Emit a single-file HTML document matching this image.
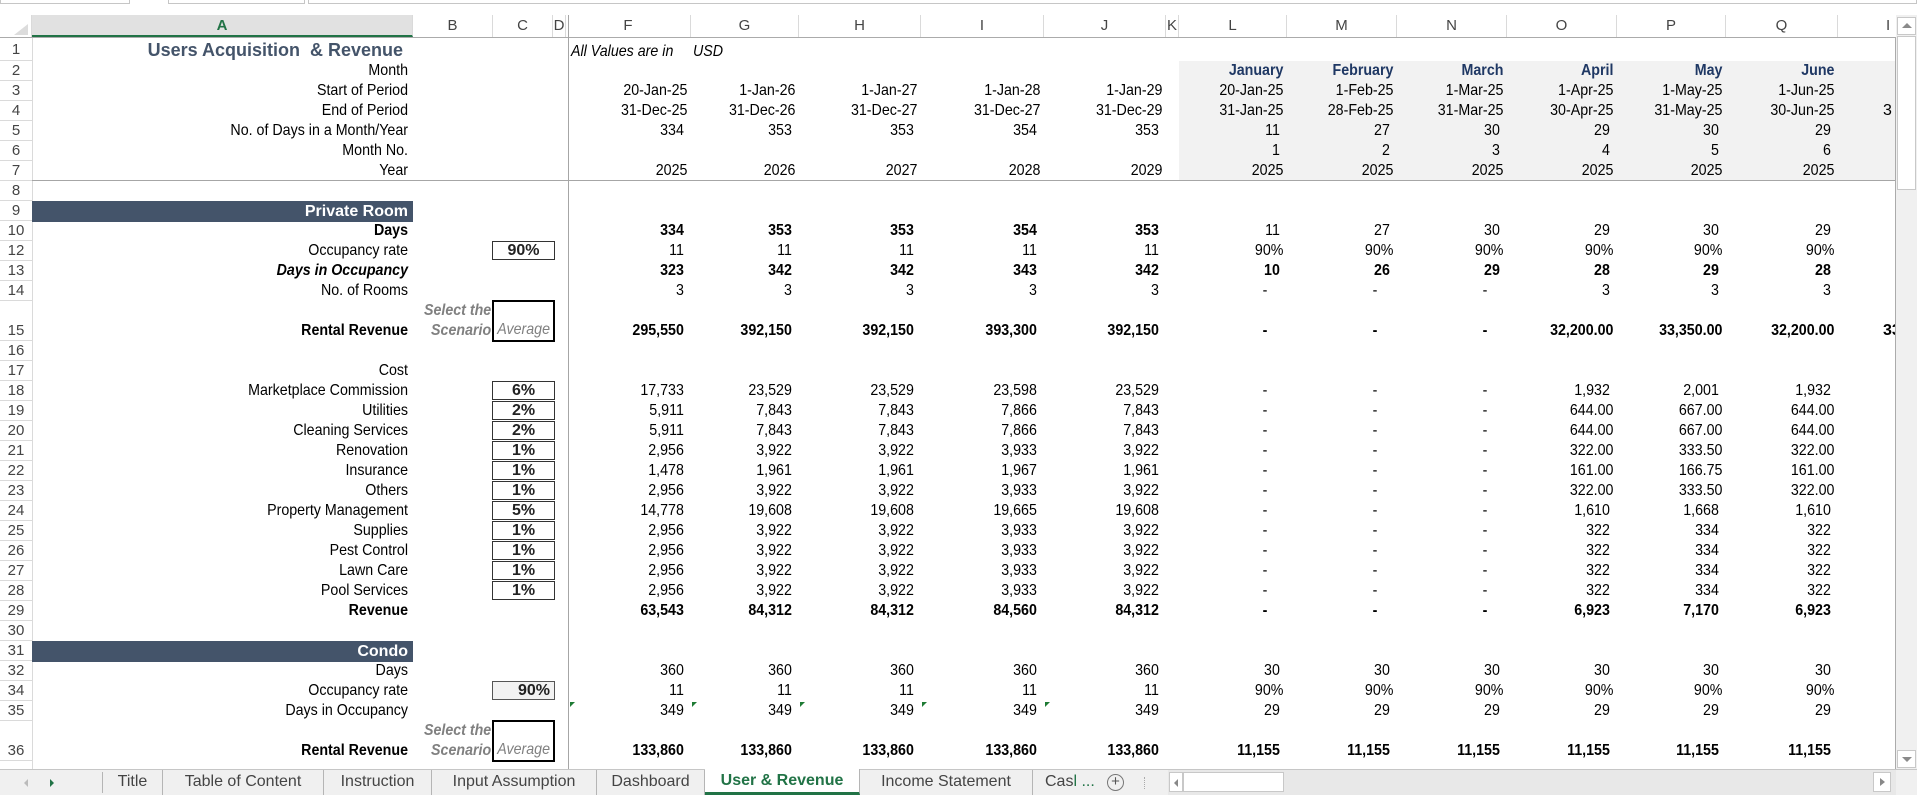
<!DOCTYPE html>
<html><head><meta charset="utf-8">
<style>
*{margin:0;padding:0}
html,body{width:1917px;height:795px;overflow:hidden;background:#fff;font-family:"Liberation Sans",Arial,sans-serif;font-size:16px;color:#000}
.abs{position:absolute}
.r{position:absolute;left:0;width:1896px;height:20px;line-height:20px}
.r.tall{height:40px}
.r span{position:absolute;top:0;height:20px;text-align:right;box-sizing:border-box;padding-right:8px;white-space:nowrap;transform:scaleX(.89);transform-origin:right center}
.r.tall span{top:20px}
.r span:nth-of-type(1){left:569px;width:122px}
.r span:nth-of-type(2){left:691px;width:108px}
.r span:nth-of-type(3){left:799px;width:122px}
.r span:nth-of-type(4){left:921px;width:123px}
.r span:nth-of-type(5){left:1044px;width:122px}
.r span:nth-of-type(6){left:1179px;width:108px}
.r span:nth-of-type(7){left:1287px;width:110px}
.r span:nth-of-type(8){left:1397px;width:110px}
.r span:nth-of-type(9){left:1507px;width:110px}
.r span:nth-of-type(10){left:1617px;width:109px}
.r span:nth-of-type(11){left:1726px;width:112px}
.r span:nth-of-type(12){left:1883px;width:13px;text-align:left;padding:0;overflow:hidden;transform:none}
.r span.dt{padding-right:4px}
.r span.ds{padding-right:22px}
.lab{position:absolute;left:32px;width:376px;text-align:right;top:0;height:20px;white-space:nowrap;transform:scaleX(.89);transform-origin:right center}
.tall .lab{top:20px}
.b span,.b .lab{font-weight:bold}
.rn{position:absolute;left:0;width:32px;text-align:center;color:#444;font-family:"Liberation Sans",Arial,sans-serif;font-size:15px;border-bottom:1px solid #dadada;box-sizing:border-box}
.ch{position:absolute;top:15px;height:22px;line-height:22px;text-align:center;color:#444;font-family:"Liberation Sans",Arial,sans-serif;font-size:15px;border-right:1px solid #dadada;box-sizing:border-box}
.bar{position:absolute;left:32px;width:381px;height:21px;background:#44546a;color:#fff;font-weight:bold;text-align:right;line-height:21px;box-sizing:border-box;padding-right:5px}
.box{position:absolute;left:492px;width:63px;border:1px solid #333;box-sizing:border-box;text-align:center;font-weight:bold;line-height:17px;height:19px;color:#222}
.sel{position:absolute;left:413px;width:80px;text-align:right;color:#808080;font-weight:bold;font-style:italic;line-height:20px;padding-right:2px;box-sizing:border-box;white-space:nowrap;transform:scaleX(.89);transform-origin:right center}
.avg{position:absolute;left:492px;width:63px;height:42px;border:2px solid #000;box-sizing:border-box;color:#808080;font-style:italic;text-align:center}
.avg div{position:absolute;bottom:0;left:0;right:0;line-height:20px;transform:scaleX(.89)}
.mo span{font-weight:bold;color:#1f3864}
.tri{position:absolute;width:0;height:0;border-top:5px solid #1e7b34;border-right:5px solid transparent}
.tab{position:absolute;top:770px;height:25px;line-height:24px;font-family:"Liberation Sans",Arial,sans-serif;font-size:15px;color:#444;text-align:center;border-right:1px solid #b5b5b5;box-sizing:border-box}
</style></head><body>
<div class="abs" style="left:0;top:-2px;width:130px;height:6px;border:1px solid #c6c6c6;box-sizing:border-box"></div>
<div class="abs" style="left:168px;top:-2px;width:137px;height:6px;border:1px solid #c6c6c6;box-sizing:border-box"></div>
<div class="abs" style="left:308px;top:-2px;width:1609px;height:6px;border:1px solid #c6c6c6;box-sizing:border-box"></div>
<div class="abs" style="left:0;top:15px;width:32px;height:22px;border-right:1px solid #dadada;box-sizing:border-box"></div>
<div class="abs" style="left:14px;top:24px;width:0;height:0;border-left:14px solid transparent;border-bottom:11px solid #dcdcdc"></div>
<div class="ch" style="left:32px;width:381px;background:#e1e1e1;color:#217346;font-weight:bold;border-bottom:2px solid #217346">A</div>
<div class="ch" style="left:413px;width:80px">B</div>
<div class="ch" style="left:493px;width:60px">C</div>
<div class="ch" style="left:553px;width:13px">D</div>
<div class="ch" style="left:566px;width:125px">F</div>
<div class="ch" style="left:691px;width:108px">G</div>
<div class="ch" style="left:799px;width:122px">H</div>
<div class="ch" style="left:921px;width:123px">I</div>
<div class="ch" style="left:1044px;width:122px">J</div>
<div class="ch" style="left:1166px;width:13px">K</div>
<div class="ch" style="left:1179px;width:108px">L</div>
<div class="ch" style="left:1287px;width:110px">M</div>
<div class="ch" style="left:1397px;width:110px">N</div>
<div class="ch" style="left:1507px;width:110px">O</div>
<div class="ch" style="left:1617px;width:109px">P</div>
<div class="ch" style="left:1726px;width:112px">Q</div>
<div class="ch" style="left:1838px;width:58px;text-align:left;padding-left:48px;border-right:none">I</div>
<div class="abs" style="left:0;top:37px;width:1896px;height:1px;background:#ababab"></div>
<div class="rn" style="top:38px;height:23px;line-height:24px">1</div>
<div class="rn" style="top:61px;height:20px;line-height:20px">2</div>
<div class="rn" style="top:81px;height:20px;line-height:20px">3</div>
<div class="rn" style="top:101px;height:20px;line-height:20px">4</div>
<div class="rn" style="top:121px;height:20px;line-height:20px">5</div>
<div class="rn" style="top:141px;height:20px;line-height:20px">6</div>
<div class="rn" style="top:161px;height:20px;line-height:20px">7</div>
<div class="rn" style="top:181px;height:20px;line-height:20px">8</div>
<div class="rn" style="top:201px;height:20px;line-height:20px">9</div>
<div class="rn" style="top:221px;height:20px;line-height:20px">10</div>
<div class="rn" style="top:241px;height:20px;line-height:20px">12</div>
<div class="rn" style="top:261px;height:20px;line-height:20px">13</div>
<div class="rn" style="top:281px;height:20px;line-height:20px">14</div>
<div class="rn" style="top:301px;height:40px;line-height:60px">15</div>
<div class="rn" style="top:341px;height:20px;line-height:20px">16</div>
<div class="rn" style="top:361px;height:20px;line-height:20px">17</div>
<div class="rn" style="top:381px;height:20px;line-height:20px">18</div>
<div class="rn" style="top:401px;height:20px;line-height:20px">19</div>
<div class="rn" style="top:421px;height:20px;line-height:20px">20</div>
<div class="rn" style="top:441px;height:20px;line-height:20px">21</div>
<div class="rn" style="top:461px;height:20px;line-height:20px">22</div>
<div class="rn" style="top:481px;height:20px;line-height:20px">23</div>
<div class="rn" style="top:501px;height:20px;line-height:20px">24</div>
<div class="rn" style="top:521px;height:20px;line-height:20px">25</div>
<div class="rn" style="top:541px;height:20px;line-height:20px">26</div>
<div class="rn" style="top:561px;height:20px;line-height:20px">27</div>
<div class="rn" style="top:581px;height:20px;line-height:20px">28</div>
<div class="rn" style="top:601px;height:20px;line-height:20px">29</div>
<div class="rn" style="top:621px;height:20px;line-height:20px">30</div>
<div class="rn" style="top:641px;height:20px;line-height:20px">31</div>
<div class="rn" style="top:661px;height:20px;line-height:20px">32</div>
<div class="rn" style="top:681px;height:20px;line-height:20px">34</div>
<div class="rn" style="top:701px;height:20px;line-height:20px">35</div>
<div class="rn" style="top:721px;height:40px;line-height:60px">36</div>
<div class="abs" style="left:32px;top:38px;width:1px;height:732px;background:#dadada"></div>

<div class="abs" style="left:1179px;top:61px;width:717px;height:120px;background:#f2f2f2"></div>
<div class="abs" style="left:568px;top:15px;width:1px;height:755px;background:#a6a6a6"></div>
<div class="abs" style="left:32px;top:180px;width:1864px;height:1px;background:#a6a6a6"></div>

<div class="abs" style="left:32px;top:38px;width:371px;text-align:right;line-height:24px;font-weight:bold;font-size:18px;color:#44546a;white-space:pre">Users Acquisition  &amp; Revenue</div>
<div class="abs" style="left:571px;top:40px;line-height:24px;font-style:italic;transform:scaleX(.89);transform-origin:left center;white-space:nowrap">All Values are in</div>
<div class="abs" style="left:693px;top:40px;line-height:24px;font-style:italic;transform:scaleX(.89);transform-origin:left center">USD</div>

<div class="r mo" style="top:61px"><div class="lab">Month</div><span></span><span></span><span></span><span></span><span></span><span class="dt">January</span><span class="dt">February</span><span class="dt">March</span><span class="dt">April</span><span class="dt">May</span><span class="dt">June</span></div>
<div class="r" style="top:81px"><div class="lab">Start of Period</div><span class="dt">20-Jan-25</span><span class="dt">1-Jan-26</span><span class="dt">1-Jan-27</span><span class="dt">1-Jan-28</span><span class="dt">1-Jan-29</span><span class="dt">20-Jan-25</span><span class="dt">1-Feb-25</span><span class="dt">1-Mar-25</span><span class="dt">1-Apr-25</span><span class="dt">1-May-25</span><span class="dt">1-Jun-25</span></div>
<div class="r" style="top:101px"><div class="lab">End of Period</div><span class="dt">31-Dec-25</span><span class="dt">31-Dec-26</span><span class="dt">31-Dec-27</span><span class="dt">31-Dec-27</span><span class="dt">31-Dec-29</span><span class="dt">31-Jan-25</span><span class="dt">28-Feb-25</span><span class="dt">31-Mar-25</span><span class="dt">30-Apr-25</span><span class="dt">31-May-25</span><span class="dt">30-Jun-25</span><span>3</span></div>
<div class="r" style="top:121px"><div class="lab">No. of Days in a Month/Year</div><span>334</span><span>353</span><span>353</span><span>354</span><span>353</span><span>11</span><span>27</span><span>30</span><span>29</span><span>30</span><span>29</span></div>
<div class="r" style="top:141px"><div class="lab">Month No.</div><span></span><span></span><span></span><span></span><span></span><span>1</span><span>2</span><span>3</span><span>4</span><span>5</span><span>6</span></div>
<div class="r" style="top:161px"><div class="lab">Year</div><span class="dt">2025</span><span class="dt">2026</span><span class="dt">2027</span><span class="dt">2028</span><span class="dt">2029</span><span class="dt">2025</span><span class="dt">2025</span><span class="dt">2025</span><span class="dt">2025</span><span class="dt">2025</span><span class="dt">2025</span></div>

<div class="bar" style="top:201px">Private Room</div>
<div class="r b" style="top:221px"><div class="lab">Days</div><span>334</span><span>353</span><span>353</span><span>354</span><span>353</span><span style="font-weight:normal">11</span><span style="font-weight:normal">27</span><span style="font-weight:normal">30</span><span style="font-weight:normal">29</span><span style="font-weight:normal">30</span><span style="font-weight:normal">29</span></div>
<div class="box" style="top:241px">90%</div>
<div class="r" style="top:241px"><div class="lab">Occupancy rate</div><span>11</span><span>11</span><span>11</span><span>11</span><span>11</span><span class="dt">90%</span><span class="dt">90%</span><span class="dt">90%</span><span class="dt">90%</span><span class="dt">90%</span><span class="dt">90%</span></div>
<div class="r b" style="top:261px"><div class="lab" style="font-style:italic">Days in Occupancy</div><span>323</span><span>342</span><span>342</span><span>343</span><span>342</span><span>10</span><span>26</span><span>29</span><span>28</span><span>29</span><span>28</span></div>
<div class="r" style="top:281px"><div class="lab">No. of Rooms</div><span>3</span><span>3</span><span>3</span><span>3</span><span>3</span><span class="ds">-</span><span class="ds">-</span><span class="ds">-</span><span>3</span><span>3</span><span>3</span></div>
<div class="sel" style="top:301px">Select the</div><div class="sel" style="top:321px">Scenario</div>
<div class="avg" style="top:300px"><div>Average</div></div>
<div class="r tall b" style="top:301px"><div class="lab">Rental Revenue</div><span>295,550</span><span>392,150</span><span>392,150</span><span>393,300</span><span>392,150</span><span class="ds">-</span><span class="ds">-</span><span class="ds">-</span><span class="dt">32,200.00</span><span class="dt">33,350.00</span><span class="dt">32,200.00</span><span>33</span></div>

<div class="r" style="top:361px"><div class="lab">Cost</div></div>
<div class="box" style="top:381px">6%</div>
<div class="r" style="top:381px"><div class="lab">Marketplace Commission</div><span>17,733</span><span>23,529</span><span>23,529</span><span>23,598</span><span>23,529</span><span class="ds">-</span><span class="ds">-</span><span class="ds">-</span><span>1,932</span><span>2,001</span><span>1,932</span></div>
<div class="box" style="top:401px">2%</div>
<div class="r" style="top:401px"><div class="lab">Utilities</div><span>5,911</span><span>7,843</span><span>7,843</span><span>7,866</span><span>7,843</span><span class="ds">-</span><span class="ds">-</span><span class="ds">-</span><span class="dt">644.00</span><span class="dt">667.00</span><span class="dt">644.00</span></div>
<div class="box" style="top:421px">2%</div>
<div class="r" style="top:421px"><div class="lab">Cleaning Services</div><span>5,911</span><span>7,843</span><span>7,843</span><span>7,866</span><span>7,843</span><span class="ds">-</span><span class="ds">-</span><span class="ds">-</span><span class="dt">644.00</span><span class="dt">667.00</span><span class="dt">644.00</span></div>
<div class="box" style="top:441px">1%</div>
<div class="r" style="top:441px"><div class="lab">Renovation</div><span>2,956</span><span>3,922</span><span>3,922</span><span>3,933</span><span>3,922</span><span class="ds">-</span><span class="ds">-</span><span class="ds">-</span><span class="dt">322.00</span><span class="dt">333.50</span><span class="dt">322.00</span></div>
<div class="box" style="top:461px">1%</div>
<div class="r" style="top:461px"><div class="lab">Insurance</div><span>1,478</span><span>1,961</span><span>1,961</span><span>1,967</span><span>1,961</span><span class="ds">-</span><span class="ds">-</span><span class="ds">-</span><span class="dt">161.00</span><span class="dt">166.75</span><span class="dt">161.00</span></div>
<div class="box" style="top:481px">1%</div>
<div class="r" style="top:481px"><div class="lab">Others</div><span>2,956</span><span>3,922</span><span>3,922</span><span>3,933</span><span>3,922</span><span class="ds">-</span><span class="ds">-</span><span class="ds">-</span><span class="dt">322.00</span><span class="dt">333.50</span><span class="dt">322.00</span></div>
<div class="box" style="top:501px">5%</div>
<div class="r" style="top:501px"><div class="lab">Property Management</div><span>14,778</span><span>19,608</span><span>19,608</span><span>19,665</span><span>19,608</span><span class="ds">-</span><span class="ds">-</span><span class="ds">-</span><span>1,610</span><span>1,668</span><span>1,610</span></div>
<div class="box" style="top:521px">1%</div>
<div class="r" style="top:521px"><div class="lab">Supplies</div><span>2,956</span><span>3,922</span><span>3,922</span><span>3,933</span><span>3,922</span><span class="ds">-</span><span class="ds">-</span><span class="ds">-</span><span>322</span><span>334</span><span>322</span></div>
<div class="box" style="top:541px">1%</div>
<div class="r" style="top:541px"><div class="lab">Pest Control</div><span>2,956</span><span>3,922</span><span>3,922</span><span>3,933</span><span>3,922</span><span class="ds">-</span><span class="ds">-</span><span class="ds">-</span><span>322</span><span>334</span><span>322</span></div>
<div class="box" style="top:561px">1%</div>
<div class="r" style="top:561px"><div class="lab">Lawn Care</div><span>2,956</span><span>3,922</span><span>3,922</span><span>3,933</span><span>3,922</span><span class="ds">-</span><span class="ds">-</span><span class="ds">-</span><span>322</span><span>334</span><span>322</span></div>
<div class="box" style="top:581px">1%</div>
<div class="r" style="top:581px"><div class="lab">Pool Services</div><span>2,956</span><span>3,922</span><span>3,922</span><span>3,933</span><span>3,922</span><span class="ds">-</span><span class="ds">-</span><span class="ds">-</span><span>322</span><span>334</span><span>322</span></div>
<div class="r b" style="top:601px"><div class="lab">Revenue</div><span>63,543</span><span>84,312</span><span>84,312</span><span>84,560</span><span>84,312</span><span class="ds">-</span><span class="ds">-</span><span class="ds">-</span><span>6,923</span><span>7,170</span><span>6,923</span></div>

<div class="bar" style="top:641px">Condo</div>
<div class="r" style="top:661px"><div class="lab">Days</div><span>360</span><span>360</span><span>360</span><span>360</span><span>360</span><span>30</span><span>30</span><span>30</span><span>30</span><span>30</span><span>30</span></div>
<div class="box" style="top:681px;background:#f2f2f2;border-color:#555;text-align:right;padding-right:4px">90%</div>
<div class="r" style="top:681px"><div class="lab">Occupancy rate</div><span>11</span><span>11</span><span>11</span><span>11</span><span>11</span><span class="dt">90%</span><span class="dt">90%</span><span class="dt">90%</span><span class="dt">90%</span><span class="dt">90%</span><span class="dt">90%</span></div>
<div class="r" style="top:701px"><div class="lab">Days in Occupancy</div><span>349</span><span>349</span><span>349</span><span>349</span><span>349</span><span>29</span><span>29</span><span>29</span><span>29</span><span>29</span><span>29</span></div>
<div class="tri" style="left:570px;top:702px"></div>
<div class="tri" style="left:692px;top:702px"></div>
<div class="tri" style="left:800px;top:702px"></div>
<div class="tri" style="left:922px;top:702px"></div>
<div class="tri" style="left:1045px;top:702px"></div>
<div class="sel" style="top:721px">Select the</div><div class="sel" style="top:741px">Scenario</div>
<div class="avg" style="top:720px"><div>Average</div></div>
<div class="r tall b" style="top:721px"><div class="lab">Rental Revenue</div><span>133,860</span><span>133,860</span><span>133,860</span><span>133,860</span><span>133,860</span><span>11,155</span><span>11,155</span><span>11,155</span><span>11,155</span><span>11,155</span><span>11,155</span></div>

<div class="abs" style="left:1895px;top:37px;width:1px;height:733px;background:#ababab"></div>
<div class="abs" style="left:1896px;top:15px;width:21px;height:755px;background:#f0f0f0"></div>
<div class="abs" style="left:1897px;top:17px;width:19px;height:18px;background:#fff;border:1px solid #c8c8c8;box-sizing:border-box"></div>
<div class="abs" style="left:1902px;top:23px;width:0;height:0;border-left:5px solid transparent;border-right:5px solid transparent;border-bottom:5px solid #8a8a8a"></div>
<div class="abs" style="left:1897px;top:36px;width:19px;height:154px;background:#fff;border:1px solid #c8c8c8;box-sizing:border-box"></div>
<div class="abs" style="left:1897px;top:750px;width:19px;height:18px;background:#fff;border:1px solid #c8c8c8;box-sizing:border-box"></div>
<div class="abs" style="left:1902px;top:757px;width:0;height:0;border-left:5px solid transparent;border-right:5px solid transparent;border-top:5px solid #8a8a8a"></div>

<div class="abs" style="left:0;top:769px;width:1917px;height:26px;background:#f0f0f0;border-top:1px solid #c6c6c6;box-sizing:border-box"></div>
<div class="abs" style="left:24px;top:779px;width:0;height:0;border-top:4px solid transparent;border-bottom:4px solid transparent;border-right:4px solid #bbb"></div>
<div class="abs" style="left:50px;top:779px;width:0;height:0;border-top:4px solid transparent;border-bottom:4px solid transparent;border-left:4px solid #217346"></div>
<div class="abs" style="left:102px;top:772px;width:1px;height:21px;background:#b5b5b5"></div>
<div class="tab" style="left:103px;width:60px;font-size:16px">Title</div>
<div class="tab" style="left:163px;width:161px;font-size:16px">Table of Content</div>
<div class="tab" style="left:324px;width:108px;font-size:16px">Instruction</div>
<div class="tab" style="left:432px;width:165px;font-size:16px">Input Assumption</div>
<div class="tab" style="left:597px;width:108px;font-size:16px">Dashboard</div>
<div class="tab" style="left:705px;width:155px;top:769px;height:26px;background:#fff;color:#217346;font-weight:bold;font-size:16px;border-bottom:3px solid #217346">User &amp; Revenue</div>
<div class="tab" style="left:860px;width:173px;font-size:16px">Income Statement</div>
<div class="tab" style="left:1033px;width:70px;border-right:none;text-align:left;padding-left:12px;font-size:16px">Cas<span style="color:#217346">l ...</span></div>
<div class="abs" style="left:1107px;top:774px;width:17px;height:17px;border:1px solid #777;border-radius:50%;box-sizing:border-box;text-align:center;line-height:14px;font-size:15px;color:#555">+</div>
<div class="abs" style="left:1144px;top:777px;width:1px;height:12px;border-left:1px dotted #aaa"></div>
<div class="abs" style="left:1168px;top:770px;width:728px;height:25px;background:#e8e8e8"></div>
<div class="abs" style="left:1169px;top:772px;width:14px;height:20px;background:#fff;border:1px solid #c8c8c8;box-sizing:border-box"></div>
<div class="abs" style="left:1174px;top:779px;width:0;height:0;border-top:4px solid transparent;border-bottom:4px solid transparent;border-right:4px solid #888"></div>
<div class="abs" style="left:1183px;top:772px;width:101px;height:20px;background:#fff;border:1px solid #c8c8c8;box-sizing:border-box"></div>
<div class="abs" style="left:1873px;top:772px;width:18px;height:20px;background:#fff;border:1px solid #c8c8c8;box-sizing:border-box"></div>
<div class="abs" style="left:1880px;top:778px;width:0;height:0;border-top:4px solid transparent;border-bottom:4px solid transparent;border-left:5px solid #888"></div>
</body></html>
